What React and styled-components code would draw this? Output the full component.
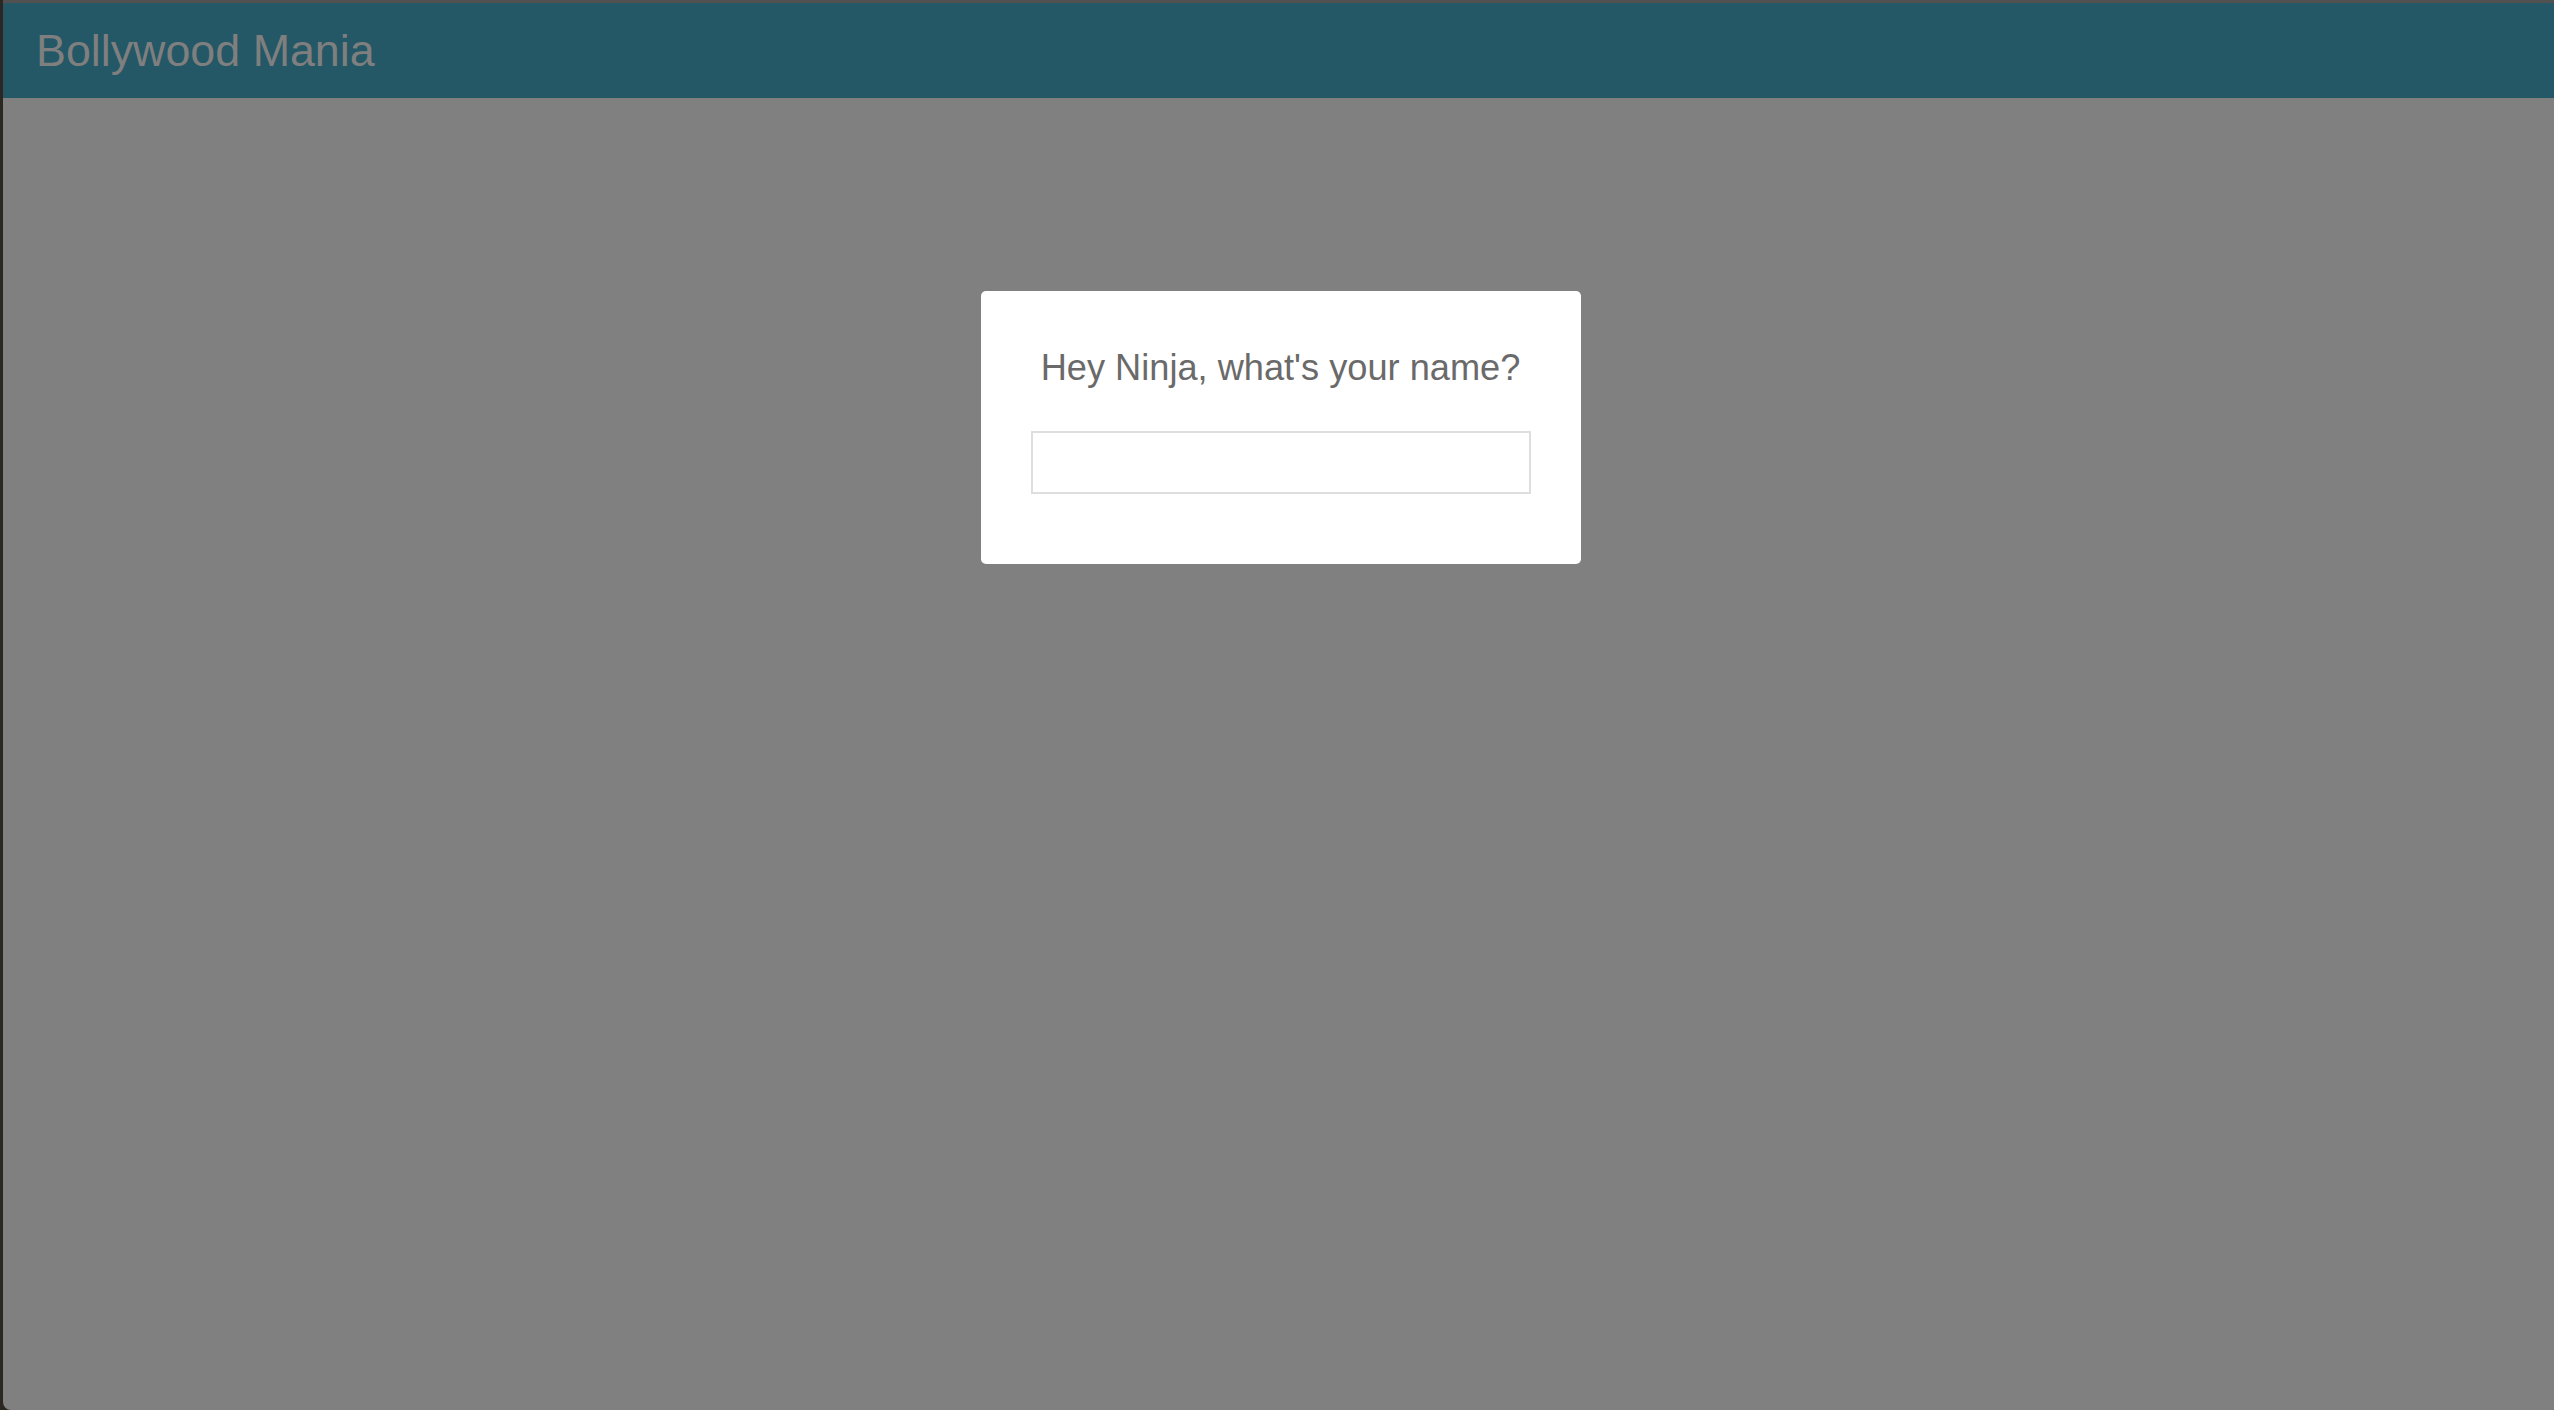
import React from 'react';
import styled, { createGlobalStyle } from 'styled-components';

const GlobalStyle = createGlobalStyle`
	html, body {
		margin: 0;
		padding: 0;
		height: 100%;
		background: #2b2723;
		font-family: "Liberation Sans", Arial, Helvetica, sans-serif;
	}
	#root {
		height: 100%;
	}
`;

const App = () => {
	return (
		<>
			<GlobalStyle />
			<Window>
				<Header>
					<Brand>Bollywood Mania</Brand>
				</Header>
				<Overlay>
					<Modal>
						<Question>Hey Ninja, what's your name?</Question>
						<NameInput type="text" />
					</Modal>
				</Overlay>
			</Window>
		</>
	);
};

const Window = styled.div`
	height: 1410px;
	margin-left: 3px;
	box-sizing: border-box;
	display: flex;
	flex-direction: column;
	border-top: 3px solid #515151;
	border-bottom-left-radius: 8px;
	overflow: hidden;
	background-color: #808080;
`;

const Header = styled.header`
	height: 95px;
	flex-shrink: 0;
	display: flex;
	align-items: center;
	padding: 0 33px;
	background-color: #245866;
`;

const Brand = styled.div`
	font-size: 44.8px;
	line-height: 95px;
	color: #7f7f7f;
`;

const Overlay = styled.main`
	flex: 1;
	display: flex;
	justify-content: center;
	align-items: flex-start;
	padding-top: 193px;
	padding-left: 4px;
`;

const Modal = styled.div`
	width: 600px;
	box-sizing: border-box;
	padding: 57px 50px 70px;
	background-color: #ffffff;
	border-radius: 5px;
	display: flex;
	flex-direction: column;
	align-items: stretch;
`;

const Question = styled.h2`
	margin: 0 0 43px;
	font-size: 36.2px;
	line-height: 40px;
	font-weight: normal;
	text-align: center;
	color: #6a6a6a;
`;

const NameInput = styled.input`
	height: 63px;
	box-sizing: border-box;
	border: 2px solid #dedede;
	border-radius: 0;
	outline: none;
	padding: 0 12px;
	font-size: 28px;
	font-family: inherit;
	color: #555;
	background: #fff;
`;

export default App;
